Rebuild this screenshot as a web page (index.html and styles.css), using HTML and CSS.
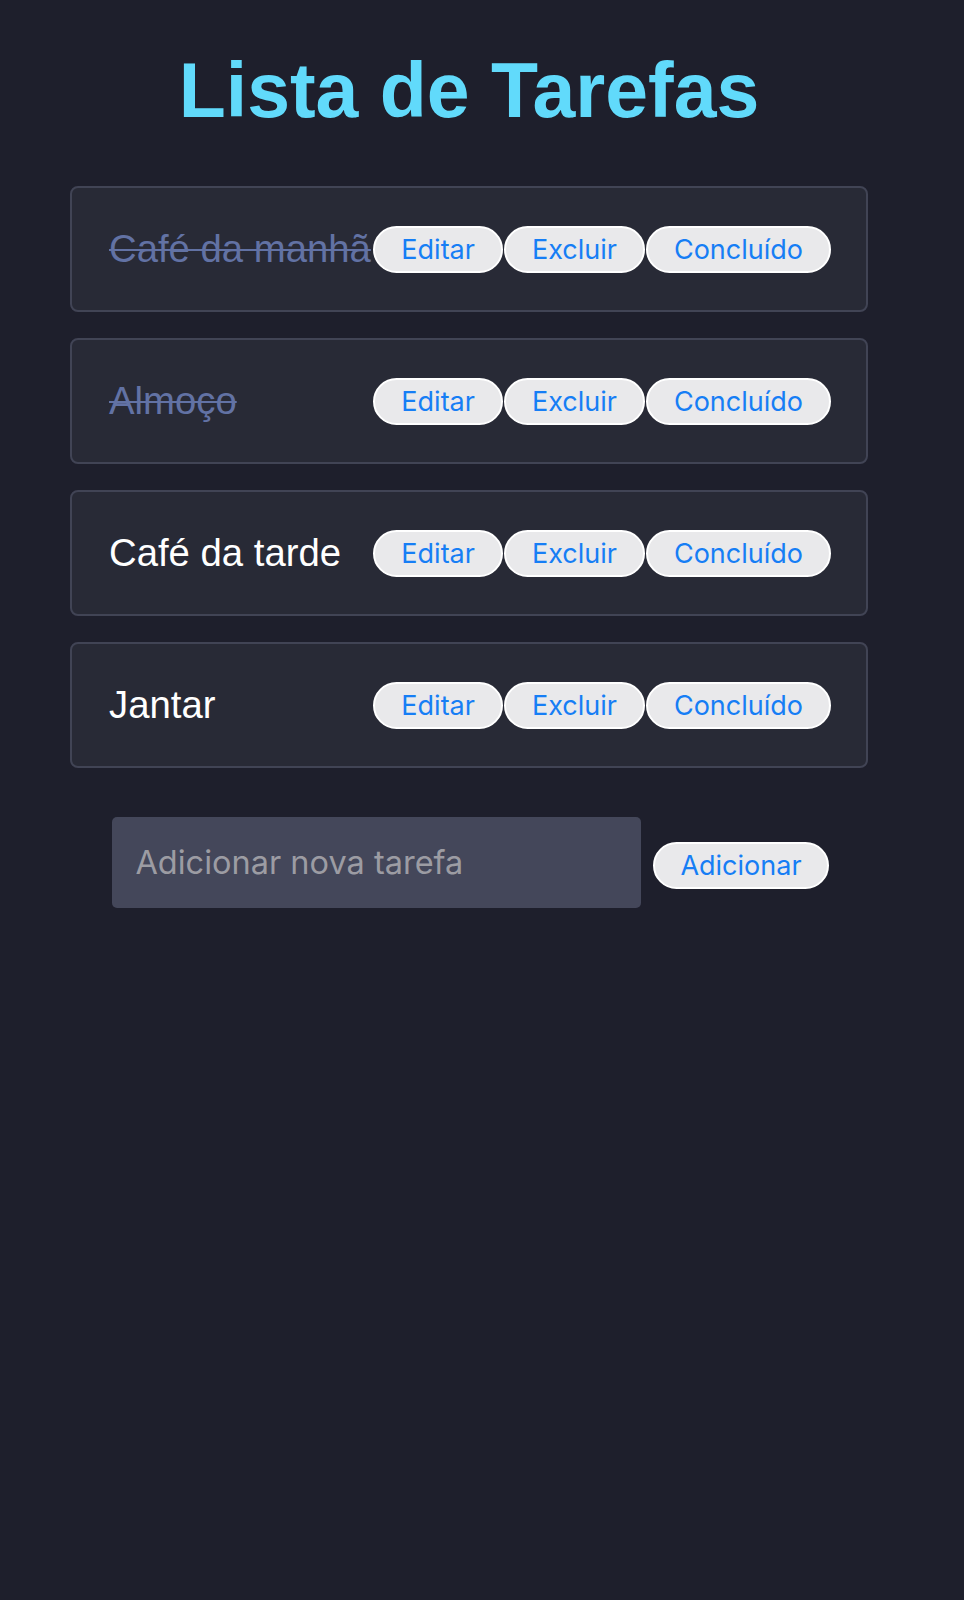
FILE: index.html
```html
<!DOCTYPE html>
<html lang="pt-BR">
<head>
<meta charset="utf-8">
<title>Lista de Tarefas</title>
<link rel="stylesheet" href="styles.css">
</head>
<body>
<div class="app">
  <h1 class="title">Lista de Tarefas</h1>
  <ul class="list">
    <li class="task">
      <span class="task-text done">Café da manhã</span>
      <div class="actions">
        <button class="btn">Editar</button>
        <button class="btn">Excluir</button>
        <button class="btn">Concluído</button>
      </div>
    </li>
    <li class="task">
      <span class="task-text done">Almoço</span>
      <div class="actions">
        <button class="btn">Editar</button>
        <button class="btn">Excluir</button>
        <button class="btn">Concluído</button>
      </div>
    </li>
    <li class="task">
      <span class="task-text">Café da tarde</span>
      <div class="actions">
        <button class="btn">Editar</button>
        <button class="btn">Excluir</button>
        <button class="btn">Concluído</button>
      </div>
    </li>
    <li class="task">
      <span class="task-text">Jantar</span>
      <div class="actions">
        <button class="btn">Editar</button>
        <button class="btn">Excluir</button>
        <button class="btn">Concluído</button>
      </div>
    </li>
  </ul>
  <div class="add-row">
    <input class="add-input" type="text" placeholder="Adicionar nova tarefa">
    <button class="btn">Adicionar</button>
  </div>
</div>
</body>
</html>
```
FILE: styles.css
```css
html, body {
  margin: 0;
  padding: 0;
  background: #1e1f2c;
  min-height: 100%;
}
body {
  font-family: "Liberation Sans", Arial, sans-serif;
  color: #ffffff;
}
.app {
  width: 798px;
  margin-left: 70px;
  padding-top: 48px;
}
.title {
  margin: 0 0 53px 0;
  text-align: center;
  font-family: "Liberation Sans", Arial, sans-serif;
  font-weight: bold;
  font-size: 77px;
  line-height: 85px;
  color: #61dafb;
}
.list {
  list-style: none;
  margin: 0;
  padding: 0;
  display: flex;
  flex-direction: column;
  gap: 26px;
}
.task {
  display: flex;
  align-items: center;
  height: 126px;
  box-sizing: border-box;
  padding: 0 35px 0 37px;
  background: #282a36;
  border: 2px solid #414455;
  border-radius: 8px;
}
.task-text {
  flex: 1;
  min-width: 0;
  white-space: nowrap;
  font-size: 38.3px;
  color: #ffffff;
}
.task-text.done {
  color: #6272a4;
  text-decoration: line-through;
  text-decoration-thickness: 2px;
}
.actions {
  display: flex;
  gap: 1px;
  flex-shrink: 0;
}
.btn {
  font-family: Inter, "Open Sans", sans-serif;
  font-size: 27px;
  color: #167ef5;
  background: #e9e9eb;
  border: 2px solid #ffffff;
  border-radius: 999px;
  height: 47px;
  padding: 0 26px;
  line-height: 1;
  cursor: pointer;
}
.add-row {
  display: flex;
  justify-content: center;
  align-items: center;
  gap: 12px;
  margin-top: 49px;
  padding-left: 3px;
}
.add-input {
  width: 529px;
  height: 91px;
  box-sizing: border-box;
  border: none;
  border-radius: 5px;
  background: #44475a;
  padding: 0 23px;
  font-family: Inter, "Open Sans", sans-serif;
  font-size: 32.5px;
  color: #ffffff;
  outline: none;
}
.add-input::placeholder {
  color: #9c9ca3;
}
.add-row .btn {
  padding: 0 25px;
  margin-top: 6px;
}
```
